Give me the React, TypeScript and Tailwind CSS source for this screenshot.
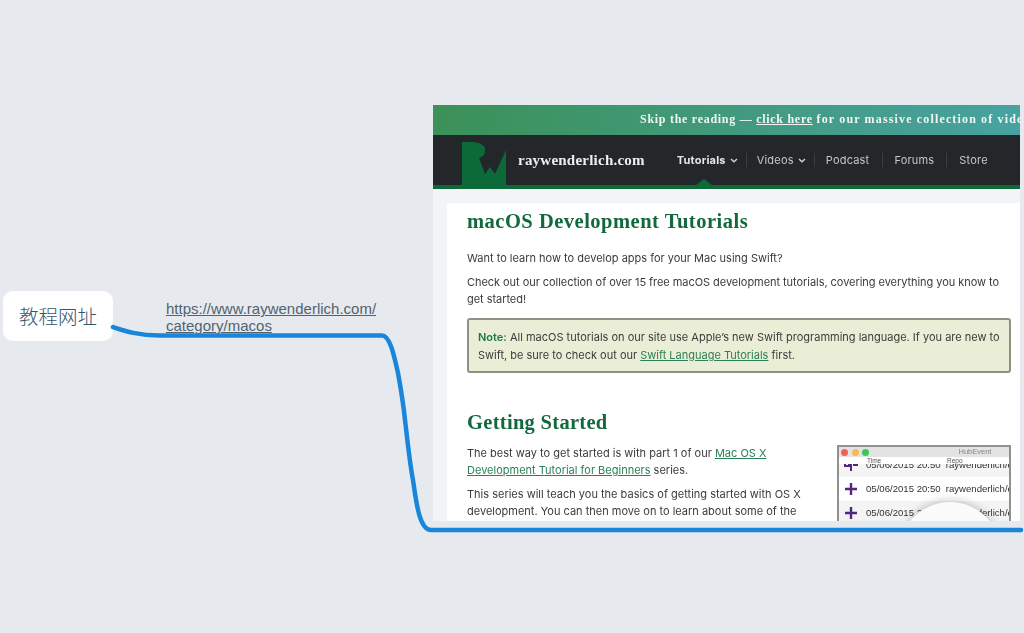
import React from "react";

const Caret = () => (
  <svg width="8" height="5" viewBox="0 0 8 5" className="ml-[4px] mt-[1px]">
    <path d="M1 1 L4 3.8 L7 1" fill="none" stroke="#d4d6d7" strokeWidth="1.3" />
  </svg>
);

const Sep = () => <div className="w-px h-[14px] bg-[#3a3e41]" />;

function Banner() {
  return (
    <div className="h-[30px] shrink-0 flex items-center pl-[207px] pb-[2px] whitespace-nowrap bg-gradient-to-r from-[#3c9157] to-[#48a2a0] font-['Liberation_Serif'] font-bold text-[12px] tracking-[0.72px] text-[#f1f6f3]">
      Skip the reading —&nbsp;<span className="underline">click here</span>&nbsp;<span className="tracking-[1.15px]">for our massive collection of videos</span>
    </div>
  );
}

function Nav() {
  return (
    <div className="h-[54px] shrink-0 bg-[#23272a] border-b-[4px] border-[#0c6a39] flex relative">
      <svg width="46" height="46" viewBox="0 0 46 46" className="ml-[28px] mt-[4px] shrink-0">
        <path
          d="M1 3 H12 C20 4 25 7 24 11 C24 15 22 18 18 19 L24 35 L29 28 L34 35 L45 11 V46 H1 Z"
          fill="#0c6a39"
        />
      </svg>
      <div className="ml-[11px] mt-[14px] h-[18px] font-['Liberation_Serif'] font-bold text-[15px] tracking-[0.23px] text-[#eeeeee] whitespace-nowrap">
        raywenderlich.com
      </div>
      <div className="ml-[32px] h-[50px] flex items-center font-['Inter'] text-[11px] tracking-[0.2px] text-[#c4c7c8] whitespace-nowrap">
        <span className="font-bold text-[#e4e5e5]">Tutorials</span>
        <Caret />
        <div className="ml-[8px]"><Sep /></div>
        <span className="ml-[10px]">Videos</span>
        <Caret />
        <div className="ml-[8px]"><Sep /></div>
        <span className="ml-[11px]">Podcast</span>
        <div className="ml-[13px]"><Sep /></div>
        <span className="ml-[11px]">Forums</span>
        <div className="ml-[12px]"><Sep /></div>
        <span className="ml-[12px]">Store</span>
      </div>
      <div className="absolute left-[263px] bottom-0 w-0 h-0 border-l-[8px] border-r-[8px] border-b-[6px] border-l-transparent border-r-transparent border-b-[#0c6a39]" />
    </div>
  );
}

const Row = ({ shade, fork }: { shade?: boolean; fork?: boolean }) => (
  <div className={`h-[24px] flex items-center whitespace-nowrap ${shade ? "bg-[#f4f4f4]" : "bg-white"}`}>
    <svg width="14" height="14" viewBox="0 0 14 14" className="ml-[5px] shrink-0">
      {fork ? (
        <path d="M1 2 V8 H5 V2 M7 1 V13 M9 2 H13 V7 H9" fill="none" stroke="#51277f" strokeWidth="2" />
      ) : (
        <path d="M7 1 V13 M1 7 H13" stroke="#51277f" strokeWidth="2.4" />
      )}
    </svg>
    <span className="ml-[8px] text-[9.6px] text-[#333]">05/06/2015 20:50</span>
    <span className="ml-[5px] text-[9.6px] text-[#333]">raywenderlich/e</span>
  </div>
);

function HubEvent() {
  return (
    <div className="w-[174px] h-[76px] shrink-0 overflow-hidden relative border-t-2 border-x-2 border-[#909090] bg-white font-['Liberation_Sans']">
      <div className="h-[10px] relative z-10 bg-[#e3e3e3] flex items-center pl-[2px] gap-[3.5px]">
        <div className="w-[7px] h-[7px] rounded-full bg-[#f0605a]" />
        <div className="w-[7px] h-[7px] rounded-full bg-[#f4bd4f]" />
        <div className="w-[7px] h-[7px] rounded-full bg-[#3fc650]" />
        <span className="ml-[86px] text-[7.5px] leading-[10px] text-[#888]">HubEvent</span>
      </div>
      <div className="h-[7px] relative z-10 bg-white flex text-[6.5px] leading-[7px] text-[#555] pl-[28px]">
        <span className="w-[80px]">Time</span>
        <span>Repo</span>
      </div>
      <div className="-mt-[11px]">
        <Row shade fork />
        <Row />
        <Row shade />
      </div>
      <div className="absolute left-[60px] top-[55px] z-20 w-[102px] h-[102px] rounded-full bg-[#fbfbfb] shadow-[0_-2px_8px_rgba(0,0,0,0.2)]" />
    </div>
  );
}

function Article() {
  return (
    <div className="ml-[14px] bg-white flex-1 pl-[20px] pr-[9px] min-h-0 overflow-hidden font-['Inter'] text-[11px] text-[#3b3b3b] whitespace-nowrap">
      <h1 className="mt-[7px] h-[22px] font-['Liberation_Serif'] font-bold text-[20.5px] leading-[22px] tracking-[0.5px] text-[#13693e]">
        macOS Development Tutorials
      </h1>
      <p className="mt-[17px] leading-[18px]">Want to learn how to develop apps for your Mac using Swift?</p>
      <p className="mt-[7px] leading-[17px] tracking-[-0.05px]">
        Check out our collection of over 15 free macOS development tutorials, covering everything you know to
        <br />
        get started!
      </p>
      <div className="mt-[10px] w-[544px] h-[55px] bg-[#ebeed6] border-2 border-[#8f9184] rounded-[3px] pl-[9px] pt-[8px] leading-[18px]">
        <span className="text-[#1a7a4a] font-semibold">Note:</span> All macOS tutorials on our site use Apple’s new Swift programming language. If you are new to
        <br />
        Swift, be sure to check out our <span className="underline text-[#2c8057]">Swift Language Tutorials</span> first.
      </div>
      <h2 className="mt-[38px] h-[22px] font-['Liberation_Serif'] font-bold text-[20.5px] leading-[22px] tracking-[0.3px] text-[#13693e]">
        Getting Started
      </h2>
      <div className="mt-[12px] flex justify-between w-[544px]">
        <div className="leading-[17px]">
          <p>
            The best way to get started is with part 1 of our <span className="underline text-[#2c8057]">Mac OS X</span>
            <br />
            <span className="underline text-[#2c8057]">Development Tutorial for Beginners</span> series.
          </p>
          <p className="mt-[7px]">
            This series will teach you the basics of getting started with OS X
            <br />
            development. You can then move on to learn about some of the
          </p>
        </div>
        <HubEvent />
      </div>
    </div>
  );
}

export default function App() {
  return (
    <div className="relative w-[1024px] h-[633px] overflow-hidden bg-[#e6eaee] flex items-start">
      <div className="ml-[3px] mt-[291px] w-[110px] h-[50px] shrink-0 rounded-[10px] bg-white flex items-center justify-center font-['Noto_Sans_CJK_SC',sans-serif] font-light text-[19.5px] text-[#33566b]">
        教程网址
      </div>
      <a className="ml-[53px] mt-[300px] w-[222px] shrink-0 font-['Liberation_Sans'] text-[15px] leading-[17px] underline text-[#53626f]">
        https://www.raywenderlich.com/
        <br />
        category/macos
      </a>
      <div className="ml-[45px] mt-[105px] w-[587px] h-[416px] shrink-0 flex flex-col overflow-hidden bg-[#f3f4f5] blur-[0.45px]">
        <Banner />
        <Nav />
        <div className="h-[14px] shrink-0" />
        <Article />
      </div>
      <svg className="absolute left-0 top-0 pointer-events-none" width="1024" height="633" viewBox="0 0 1024 633">
        <path
          d="M113 327 C125 331 138 335.5 160 335.5 L382 335.5 C390 335.5 394 355 398 373 C402 395 404 410 405 420 C408 445 410 465 413 480 C416 500 419 530 431 530 L1021 530"
          fill="none"
          stroke="#1a86db"
          strokeWidth="4.5"
          strokeLinecap="round"
        />
      </svg>
    </div>
  );
}
